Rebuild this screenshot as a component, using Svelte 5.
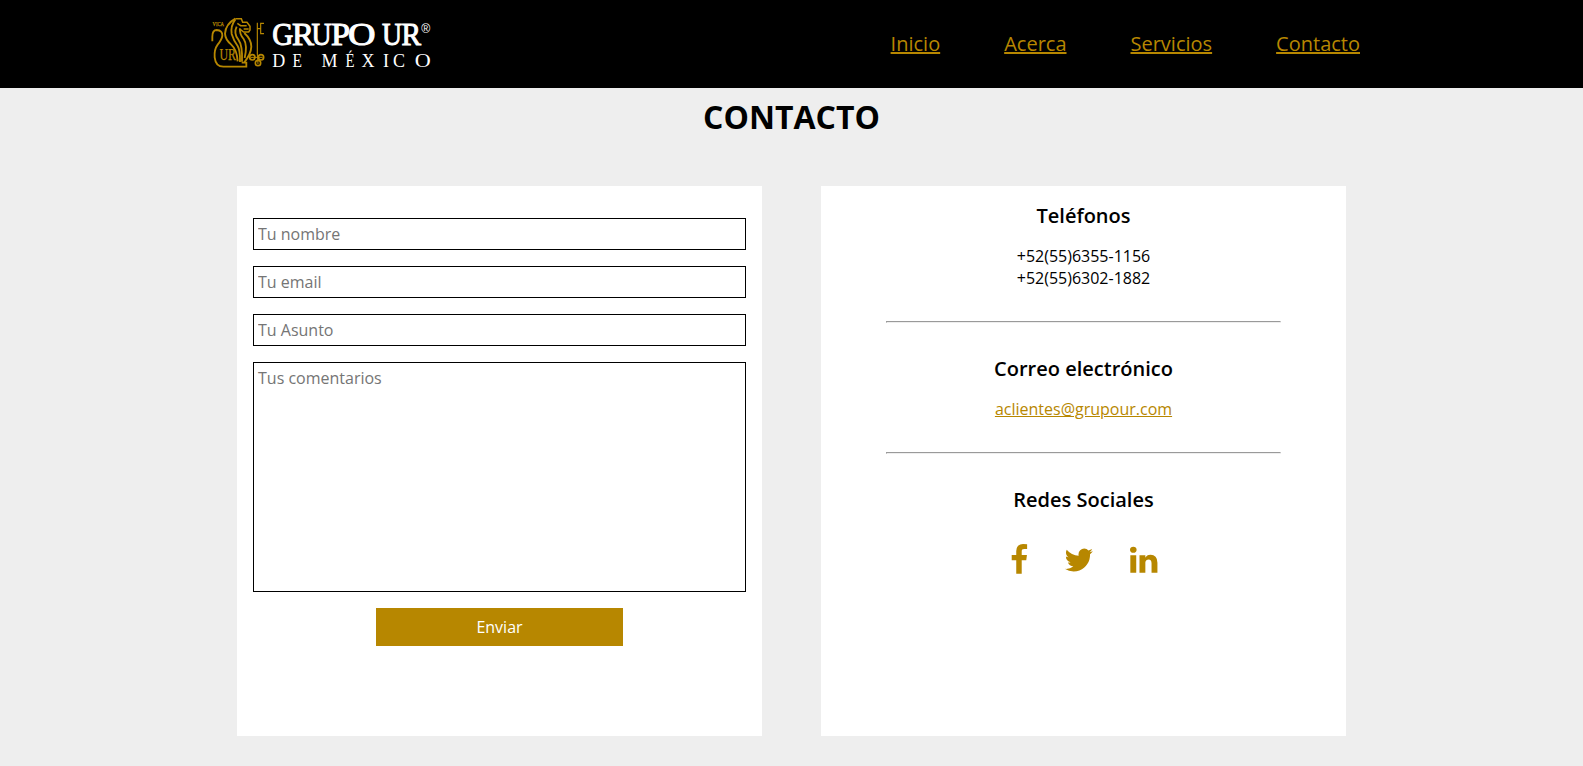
<script>
  const links = ['Inicio', 'Acerca', 'Servicios', 'Contacto'];
  const fields = ['Tu nombre', 'Tu email', 'Tu Asunto'];
  const social = [
    {
      name: 'Facebook', box: '384 0 1024 1792', width: 18.29,
      path: 'M1343 12v264h-157q-86 0-116 36t-30 108v189h293l-39 296h-254v759h-306v-759h-255v-296h255v-218q0-186 104-288.500t277-102.500q147 0 228 12z'
    },
    {
      name: 'Twitter', box: '64 0 1664 1792', width: 29.71,
      path: 'M1684 408q-67 98-162 167 1 14 1 42 0 130-38 259.500t-115.500 248.500-184.500 210.500-258 146-323 54.500q-271 0-496-145 35 4 78 4 225 0 401-138-105-2-188-64.500t-114-159.500q33 5 61 5 43 0 85-11-112-23-185.500-111.500t-73.500-205.500v-4q68 38 146 41-66-44-105-115t-39-154q0-88 44-163 121 149 294.500 238.500t371.500 99.500q-8-38-8-74 0-134 94.500-228.500t228.500-94.500q140 0 236 102 109-21 205-78-37 115-142 178 93-10 186-50z'
    },
    {
      name: 'LinkedIn', box: '128 0 1536 1792', width: 27.43,
      path: 'M477 625v991h-330v-991h330zm21-306q1 73-50.500 122t-135.500 49h-2q-82 0-132-49t-50-122q0-74 51.500-122.500t134.500-48.500 133 48.500 51 122.500zm1166 729v568h-329v-530q0-105-40.500-164.500t-126.500-59.500q-63 0-105.500 34.500t-63.500 85.500q-11 30-11 81v553h-329q2-399 2-647t-1-296l-1-48h329v144h-2q20-32 41-56t56.500-52 87-43.500 114.500-15.500q171 0 275 113.500t104 332.500z'
    }
  ];
</script>

<header>
  <svg class="logo" viewBox="210 16 224 54" width="224" height="54">
    <g transform="translate(208 14) scale(.33333)" fill="none" stroke="#b78700" stroke-width="5.5">
      <path d="M13 82V68Q13 48 26 48Q44 49 43 65Q42 76 29 92Q18 107 20 130Q23 158 46 158H115V146H101" />
      <path d="M82 14Q53 30 51 59Q52 77 69 91Q87 107 89 142" />
      <path d="M82 16Q67 36 71 60Q77 80 89 96Q97 109 96 144" />
      <path d="M86 38Q76 58 91 77Q104 94 102 143" />
      <path d="M96 44Q94 60 107 75Q119 93 110 132" />
      <path d="M109 57Q130 76 130 98Q129 120 109 145" />
      <path d="M82 14H100L104 25H117L126 37V48L122 54H107L94 44M88 28L98 35H116M107 45H122" stroke-width="4.5" />
      <path d="M148 26V121M148 44H158M168 28H158V59H168" stroke-width="3.5" />
      <g stroke-width="5">
        <circle cx="133" cy="130" r="8" /><circle cx="159" cy="130" r="8" /><circle cx="150" cy="147" r="8" />
      </g>
      <path d="M128 130H164M148 120L150 150" stroke-width="3" />
    </g>
    <g fill="#b78700" stroke="#b78700" stroke-width=".25" font-family="Liberation Serif, serif">
      <text x="212.500" y="25.700" font-size="6" textLength="11.500" lengthAdjust="spacingAndGlyphs">VICA</text>
      <text x="219.500" y="59.800" font-size="16" textLength="16.500" lengthAdjust="spacingAndGlyphs">UR</text>
    </g>
    <g fill="#fff" font-family="Liberation Serif, serif">
      <text y="45" font-size="31" stroke="#fff" stroke-width="1"><tspan x="272.300" textLength="21" lengthAdjust="spacingAndGlyphs">G</tspan><tspan x="292" textLength="22" lengthAdjust="spacingAndGlyphs">R</tspan><tspan x="311.500" textLength="20" lengthAdjust="spacingAndGlyphs">U</tspan><tspan x="331" textLength="19" lengthAdjust="spacingAndGlyphs">P</tspan><tspan x="348" textLength="27.500" lengthAdjust="spacingAndGlyphs">O</tspan></text>
      <text y="45" font-size="31" stroke="#fff" stroke-width="1"><tspan x="382" textLength="20" lengthAdjust="spacingAndGlyphs">U</tspan><tspan x="401.500" textLength="19.500" lengthAdjust="spacingAndGlyphs">R</tspan></text>
      <text x="421.300" y="32.500" font-size="12" font-family="Liberation Sans, sans-serif" textLength="9" lengthAdjust="spacingAndGlyphs">®</text>
      <text y="66.500" font-size="18"><tspan x="272.300">D</tspan><tspan x="292.500" textLength="9.500" lengthAdjust="spacingAndGlyphs">E</tspan></text>
      <text y="66.500" font-size="18"><tspan x="321.500">M</tspan><tspan x="345.500" textLength="9" lengthAdjust="spacingAndGlyphs">É</tspan><tspan x="361.500">X</tspan><tspan x="383">I</tspan><tspan x="393">C</tspan><tspan x="414.800" textLength="16" lengthAdjust="spacingAndGlyphs">O</tspan></text>
    </g>
  </svg>
  <nav>
    {#each links as link}<a href="#top">{link}</a>{/each}
  </nav>
</header>

<main>
  <h1>CONTACTO</h1>
  <div class="columns">
    <form class="card">
      {#each fields as field}<input type="text" placeholder={field} />{/each}
      <textarea placeholder="Tus comentarios"></textarea>
      <button type="button">Enviar</button>
    </form>
    <section class="card info">
      <h3>Teléfonos</h3>
      <p>+52(55)6355-1156<br />+52(55)6302-1882</p>
      <hr />
      <h3>Correo electrónico</h3>
      <p><a href="#mail">aclientes@grupour.com</a></p>
      <hr />
      <h3>Redes Sociales</h3>
      <div class="social">
        {#each social as item}
          <a href="#social" aria-label={item.name}>
            <svg viewBox={item.box} width={item.width} height="32"><path d={item.path} /></svg>
          </a>
        {/each}
      </div>
    </section>
  </div>
</main>

<style>
  :global(body) {
    margin: 0;
    background: #eee;
    color: #000;
    font: 16px 'Open Sans', sans-serif;
  }
  * { box-sizing: border-box; }
  header {
    height: 88px;
    padding: 0 223px 0 210px;
    display: flex;
    align-items: center;
    justify-content: space-between;
    background: #000;
  }
  .logo { display: block; margin-bottom: 2px; }
  nav { display: flex; gap: 64px; margin-bottom: 2px; font-size: 20px; }
  a { color: #b78700; }
  main { height: 678px; background: #eee; }
  h1 {
    margin: 0;
    padding-top: 7px;
    height: 98px;
    font-size: 32px;
    line-height: 44px;
    font-weight: 700;
    text-align: center;
  }
  .columns { display: flex; justify-content: center; gap: 59px; }
  .card { width: 525px; height: 550px; padding: 16px; background: #fff; }
  form { display: flex; flex-direction: column; gap: 16px; }
  form.card { padding-top: 32px; }
  input, textarea {
    width: 100%;
    height: 32px;
    margin: 0;
    padding: 4px;
    border: 1px solid #000;
    border-radius: 0;
    background: #fff;
    font: inherit;
    resize: none;
    display: block;
  }
  textarea { height: 230px; }
  input::placeholder, textarea::placeholder { color: #757575; }
  button {
    align-self: center;
    width: 247px;
    height: 38px;
    padding: 0;
    border: 0;
    background: #b78700;
    color: #fff;
    font: inherit;
  }
  .info { text-align: center; }
  h3 { margin: 0 0 16px; font-size: 20px; line-height: 27px; font-weight: 600; }
  p { margin: 0; line-height: 22px; }
  hr { width: 395px; margin: 32px auto; }
  .social { display: flex; justify-content: center; gap: 36.3px; padding-top: 14.7px; }
  .social svg { display: block; fill: #b78700; }
</style>
